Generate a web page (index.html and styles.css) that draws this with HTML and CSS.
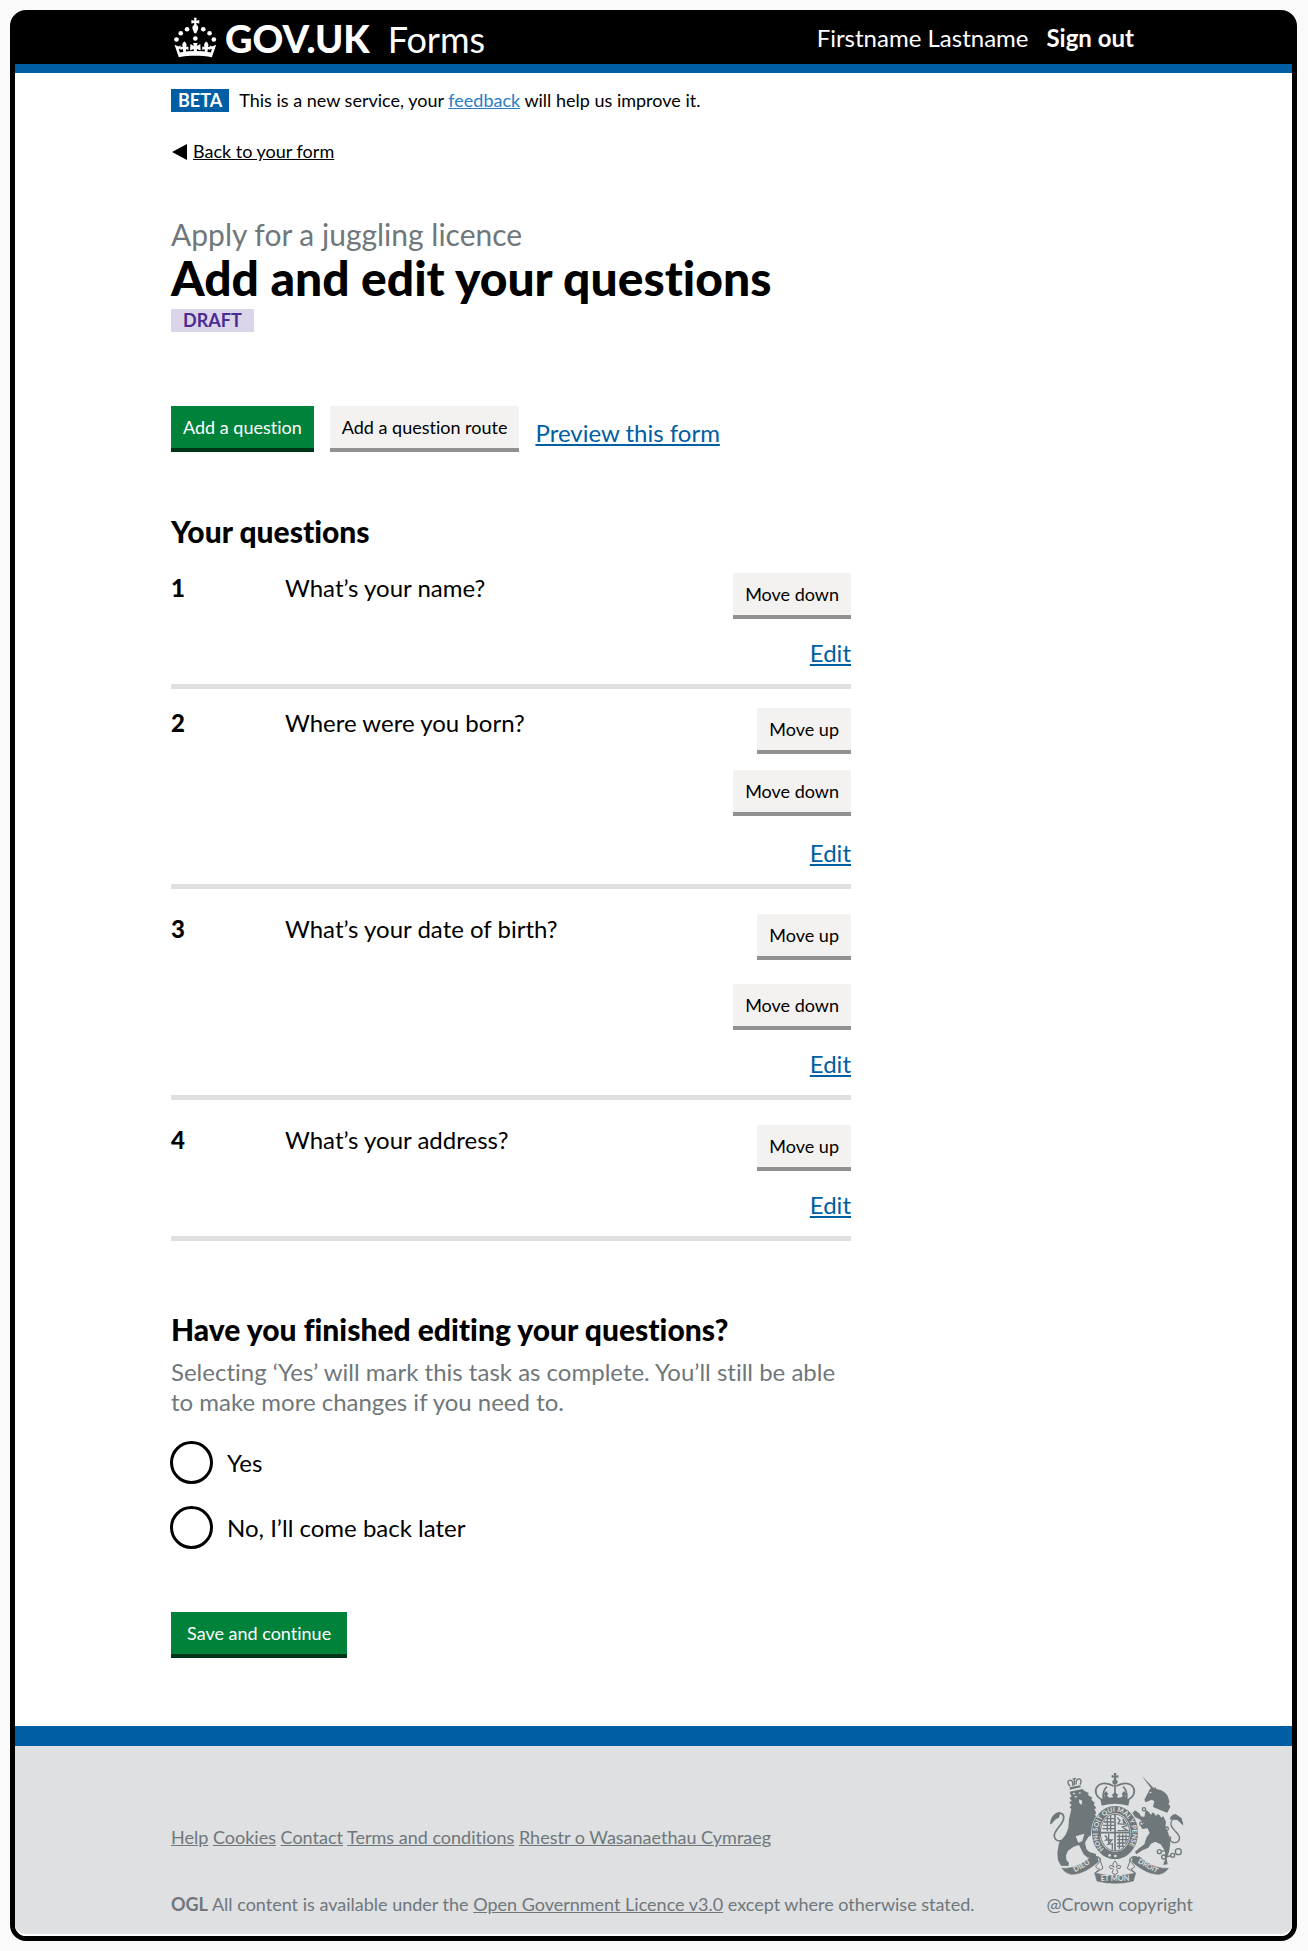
FILE: index.html
```html
<!DOCTYPE html>
<html lang="en">
<head>
<meta charset="utf-8">
<meta name="viewport" content="width=device-width, initial-scale=1">
<title>Add and edit your questions - GOV.UK Forms</title>
<link rel="stylesheet" href="styles.css">
</head>
<body>
<div class="frame">
  <header class="header">
    <div class="brand">
      <svg class="crown" viewBox="38 22 132 124" aria-hidden="true">
        <g fill="#fff">
          <circle cx="48" cy="90" r="7"/><circle cx="61" cy="71" r="7"/><circle cx="80" cy="59" r="7"/>
          <circle cx="129" cy="59" r="7"/><circle cx="148" cy="71" r="7"/><circle cx="161" cy="90" r="7"/>
          <circle cx="105" cy="87" r="7"/>
          <path d="M101 24h8l-1 9 9-2v11l-9-2 1 6c5 3 6 8 4 13l-5 12h-6l-5-12c-2-5-1-10 4-13l1-6-9 2V31l9 2z"/>
          <path d="M42 106l12 5 6-3 1 10-6 1 3 10q47-8 94 0l3-10-6-1 1-10 6 3 12-5-13 38c-32-6-68-6-100 0z"/>
          <path d="M69 130l-2-11-7 3v-11l7 2c-3-6-2-12 5-17 7 5 8 11 5 17l7-2v11l-7-3-1 11zM134 130l-1-11-7 3v-11l7 2c-3-6-2-12 5-17 7 5 8 11 5 17l7-2v11l-7-3-2 11z"/>
          <path d="M101 128l-1-9-11 4 1-19 11 6-3-9h14l-3 9 11-6 1 19-11-4-1 9z"/>
        </g>
      </svg>
      <span class="brand-name">GOV.UK</span>
      <span class="brand-product">Forms</span>
    </div>
    <div class="account">
      <span>Firstname Lastname</span>
      <a class="sign-out" href="#">Sign out</a>
    </div>
  </header>

  <main class="main">
    <div class="phase">
      <strong class="tag">BETA</strong>
      <span>This is a new service, your <a class="feedback" href="#">feedback</a> will help us improve it.</span>
    </div>
    <a class="back" href="#"><svg class="back-arrow" viewBox="0 0 15 16" aria-hidden="true"><path d="M0 8L15 0v16z"/></svg><span class="back-text">Back to your form</span></a>

    <p class="caption">Apply for a juggling licence</p>
    <h1 class="title">Add and edit your questions</h1>
    <strong class="tag tag-draft">DRAFT</strong>

    <div class="actions">
      <button class="button" type="button">Add a question</button>
      <button class="button button-grey" type="button">Add a question route</button>
      <a class="link preview" href="#">Preview this form</a>
    </div>

    <h2 class="heading">Your questions</h2>
    <ol class="questions">
      <li class="question">
        <span class="number">1</span><span class="text">What’s your name?</span>
        <div class="controls">
          <button class="button button-grey" type="button">Move down</button>
          <a class="link edit" href="#">Edit</a>
        </div>
      </li>
      <li class="question question-compact">
        <span class="number">2</span><span class="text">Where were you born?</span>
        <div class="controls">
          <button class="button button-grey" type="button">Move up</button>
          <button class="button button-grey" type="button">Move down</button>
          <a class="link edit" href="#">Edit</a>
        </div>
      </li>
      <li class="question">
        <span class="number">3</span><span class="text">What’s your date of birth?</span>
        <div class="controls">
          <button class="button button-grey" type="button">Move up</button>
          <button class="button button-grey" type="button">Move down</button>
          <a class="link edit" href="#">Edit</a>
        </div>
      </li>
      <li class="question">
        <span class="number">4</span><span class="text">What’s your address?</span>
        <div class="controls">
          <button class="button button-grey" type="button">Move up</button>
          <a class="link edit" href="#">Edit</a>
        </div>
      </li>
    </ol>

    <form class="finish">
      <fieldset class="choices" aria-describedby="finish-hint">
        <legend class="heading">Have you finished editing your questions?</legend>
        <p class="hint" id="finish-hint">Selecting ‘Yes’ will mark this task as complete. You’ll still be able to make more changes if you need to.</p>
        <div class="choice"><input class="radio" type="radio" name="finished" id="yes"><label for="yes">Yes</label></div>
        <div class="choice"><input class="radio" type="radio" name="finished" id="no"><label for="no">No, I’ll come back later</label></div>
      </fieldset>
      <button class="button button-save" type="button">Save and continue</button>
    </form>
  </main>

  <footer class="footer">
    <div class="footer-text">
      <nav class="footer-links">
        <a href="#">Help</a> <a href="#">Cookies</a> <a href="#">Contact</a> <a href="#">Terms and conditions</a> <a href="#">Rhestr o Wasanaethau Cymraeg</a>
      </nav>
      <p class="licence"><strong>OGL</strong> All content is available under the <a href="#">Open Government Licence v3.0</a> except where otherwise stated.</p>
    </div>
    <div class="copyright">
      <svg class="crest" viewBox="60 38 405 333" aria-hidden="true">
        <!-- lion -->
        <g fill="#6f777b">
          <path d="M122 94l38-8 8 7 11 5-2 6 13 8-3 6 11 10-4 4 8 12-6 2 6 12-4 4 8 20 6 20 4 30-9-8-9-25-5 6 4 15-8-4-4 10-7 4-10 17 4 19 9 9 20 6v9l-25 2-12-10-14-28-16 5-17 12-6 14 1 14 8 9-2 9-22-1-9-16-2-22 5-30 20-25 8-20 2-26 7-30-5-6 6-8-8-6 8-6-7-8 7-5-4-6z"/>
          <path d="M64 190c-1-18 12-34 30-36l-4 18-18 8z"/>
          <path d="M122 81l32-6 1 6-32 7z"/>
        </g>
        <path d="M112 230c-10 16-32 16-36-2-4-20 32-36 28-60-4-13-18-10-22 0-2 8-10 12-17 22" fill="none" stroke="#6f777b" stroke-width="5"/>
        <path d="M124 78c-14-12-4-24 5-16 3 4 3 10 2 15M153 73c8-14-2-22-9-15-4 4-3 10-2 15M136 53v22M131 56l10-2" fill="none" stroke="#6f777b" stroke-width="4"/>
        <path d="M130 99l9-2-3 6zM148 96l9 1-5 4zM151 117l9 5-3 13-7-9zM135 108h10l-4 5zM140 228l26-8-6 22-12 5z" fill="#dee0e2"/>
        <!-- unicorn -->
        <g fill="#6f777b">
          <path d="M338 46l39 40-7 3zM364 84l9 3 6-8 3 7q29 4 36 27l4 13-4 3 6 10-9 18-7-2-36-15 4-17-8-5-18 8-4-8 8-15z"/>
          <path d="M350 150L403 168L411 185L409 200L418 218L424 250L420 275L413 295L416 312L402 314L409 296L408 272L395 252L378 244L366 250L358 262L340 270L322 282L318 274L332 262L346 252L352 232L362 218L356 204L340 206L334 196L346 190L334 178L318 170L310 158L318 150L330 158L336 168L346 170Z"/>
          <path d="M458 174l5 22-18-17-23-2q4-15 18-16z"/>
        </g>
        <g fill="none" stroke="#6f777b" stroke-width="4">
          <path d="M461 190c-13-25-38-16-35 3 5 20 30 27 25 44-5 15-26 12-31-3"/>
          <path d="M350 142l16 18 5-13 10 17 7-13 9 18 11-8" stroke="#dee0e2"/>
          <circle cx="345" cy="147" r="5"/><circle cx="337" cy="190" r="5"/><circle cx="413" cy="205" r="5"/><circle cx="420" cy="234" r="5"/><circle cx="391" cy="274" r="6"/><circle cx="404" cy="290" r="6"/><circle cx="431" cy="285" r="6"/><circle cx="448" cy="274" r="9"/>
          <path d="M398 273l10-2M410 290l16-4"/>
        </g>
        <path d="M359 98l7-4 2 5z" fill="#dee0e2"/>
        <!-- crown -->
        <g fill="none" stroke="#6f777b" stroke-width="5">
          <path d="M220 119c-40-20-15-69 34-42M296 119c40-20 15-69-34-42M258 72v49M234 79c-12 9-13 24-11 39M282 79c12 9 13 24 11 39"/>
          <path d="M217 119q41-12 82 0l-3 14q-38-10-76 0z" fill="#6f777b"/>
        </g>
        <path d="M254 38h8l-1 8 7-2v9l-7-2 1 8c5 2 6 9 0 13h-8c-6-4-5-11 0-13l1-8-7 2v-9l7 2zM222 116l5-10-4-5 8-9 7 9-4 5 12 11 7-8-5-5 10-8 10 8-5 5 7 8 12-11-4-5 7-9 8 9-4 5 5 10z" fill="#6f777b"/>
        <!-- shield and garter -->
        <g fill="none" stroke="#6f777b">
          <ellipse cx="258" cy="217" rx="70" ry="81" stroke="#dee0e2" stroke-width="3"/>
          <ellipse cx="258" cy="217" rx="58" ry="69" stroke-width="22"/>
          <ellipse cx="258" cy="217" rx="44" ry="55" fill="#dee0e2" stroke-width="3"/>
          <path d="M214 217h88M258 162v110" stroke-width="5"/>
          <path d="M225 185h30M222 195h33M220 205h35M232 175h23M235 170v42M245 165v47M263 228h38M264 238h33M264 248h29M264 258h22M271 222v43M281 222v34M291 222v23" stroke-width="4"/>
          <path d="M265 172l8 9-6 9 18 2-3-16 12 20-14 4 16 11h-30M227 226q12 7 4 13h18l-12 13 13-2v18M239 221v31" stroke-width="4"/>
        </g>
        <path id="garter-arc" d="M226 267a52 63 0 1 1 64 0" fill="none"/>
        <g class="motto">
          <text font-size="20"><textPath href="#garter-arc" startOffset="1">HONI SOIT QUI MAL Y PENSE</textPath></text>
        </g>
        <g fill="#dee0e2"><circle cx="242" cy="285" r="4"/><circle cx="259" cy="287" r="4"/></g>
        <!-- ribbon -->
        <g fill="#6f777b" stroke="#6f777b" stroke-width="2">
          <path d="M99 324c35 2 65-14 86-34l20 0 3 14c-24 20-49 37-80 38-13-2-22-8-29-18z"/>
          <path d="M418 324c-35 2-65-14-86-34l-20 0-3 14c24 20 49 37 80 38 13-2 22-8 29-18z"/>
          <path d="M197 338q61 17 123 0l-7 24q-55 14-109 0z"/>
        </g>
        <g fill="#dee0e2" stroke="#6f777b" stroke-width="3">
          <path d="M190 292c20-8 34 4 18 17s-3 14 3 17l-13 12 24-14-9-25q0-10-12-10z"/>
          <path d="M327 292c-20-8-34 4-18 17s3 14-3 17l13 12-24-14 9-25q0-10 12-10z"/>
        </g>
        <path d="M258 302q11 10 3 19 12-11 14-2 0 8-9 5l-3 3 4 10-9 6-9-6 4-10-3-3q-9 3-9-5 2-9 14 2-8-9 3-19z" fill="none" stroke="#6f777b" stroke-width="3"/>
        <g class="motto" text-anchor="middle">
          <text font-size="22" x="161" y="323" transform="rotate(-30 161 323)">DIEU</text>
          <text font-size="22" x="258" y="363">ET MON</text>
          <text font-size="21" x="354" y="323" transform="rotate(29 354 323)">DROIT</text>
        </g>
      </svg>
      <span>@Crown copyright</span>
    </div>
  </footer>
</div>
</body>
</html>
```
FILE: styles.css
```css
* { box-sizing: border-box; }

body {
  margin: 0;
  padding: 10px 11px 10px 10px;
  background: #fafafa;
  color: #000;
  font-family: Lato, "Liberation Sans", sans-serif;
  font-size: 24px;
  line-height: 30px;
  font-variant-ligatures: none;
}

h1, h2, p, ol { margin: 0; padding: 0; }

.frame {
  border: 5px solid #000;
  border-radius: 16px;
  background: #fff;
}

.header {
  display: flex;
  justify-content: space-between;
  align-items: center;
  height: 58px;
  padding: 0 158px 4px 158px;
  border-bottom: 9px solid #005ea5;
  background: #000;
  color: #fff;
}

.brand { display: flex; align-items: baseline; }
.crown { width: 44px; height: 41px; margin-right: 8px; align-self: center; }
.brand-name { font-size: 38px; line-height: 48px; font-weight: 900; }
.brand-product { margin-left: 18px; font-size: 36px; }

.account { display: flex; gap: 18px; }
.sign-out { color: #fff; font-weight: 700; text-decoration: none; }

.main {
  display: flex;
  flex-direction: column;
  align-items: flex-start;
  padding: 16px 24px 68px 156px;
}

.phase, .back { font-size: 18px; line-height: 23px; }
.phase { display: flex; gap: 10px; }

.tag {
  padding: 0 7px;
  background: #005ea5;
  color: #fff;
  font-size: 18px;
  line-height: 23px;
  font-weight: 700;
}
.tag-draft {
  margin-top: 5px;
  padding: 0 12px;
  background: #dbd5e9;
  color: #4c2c92;
}

.feedback { color: #2b7cc4; }

.back {
  display: flex;
  align-items: center;
  gap: 6px;
  margin-top: 28px;
  color: #000;
  text-decoration: none;
}
.back-arrow { width: 15px; height: 16px; margin-left: 1px; }
.back-text { text-decoration: underline; }

.caption { margin-top: 53px; color: #6f777b; font-size: 30px; line-height: 36px; }
.title { font-size: 48px; line-height: 52px; font-weight: 900; }

.actions { display: flex; gap: 16px; margin-top: 74px; }

.button {
  height: 46px;
  padding: 0 12px;
  border: 0;
  border-bottom: 4px solid #003618;
  border-radius: 0;
  background: #00823b;
  color: #fff;
  font: inherit;
  font-size: 18px;
  line-height: 42px;
}
.button-grey { border-color: #929191; background: #f3f2f1; color: #000; }
.button-save { margin-top: 63px; padding: 0 16px; }

.link { color: #005ea5; }
.preview { margin-top: 12px; }

.heading { padding: 0; font-size: 30px; line-height: 34px; font-weight: 900; }
.actions + .heading { margin-top: 62px; }

.questions { width: 100%; max-width: 680px; list-style: none; }
.question {
  display: grid;
  grid-template-columns: 114px 1fr auto;
  padding: 25px 0 16px;
  border-bottom: 5px solid #dee0e2;
}
.number { font-weight: 900; }
.controls { display: flex; flex-direction: column; align-items: flex-end; gap: 24px; }
.edit { margin-top: -5px; }
.question-compact { padding-top: 19px; }
.question-compact .controls { gap: 16px; }
.question-compact .edit { margin-top: 6px; }

.finish { max-width: 680px; margin-top: 71px; }
.choices { margin: 0; padding: 0; border: 0; }
.hint { margin: 11px 0 24px; color: #6f777b; }
.choice { display: flex; align-items: center; gap: 14px; }
.choice + .choice { margin-top: 22px; }
.radio {
  appearance: none;
  width: 43px;
  height: 43px;
  margin: 0 0 0 -1px;
  border: 3px solid #000;
  border-radius: 50%;
  background: #fff;
}

.footer {
  display: flex;
  justify-content: space-between;
  align-items: flex-end;
  padding: 27px 99px 18px 156px;
  border-top: 20px solid #005ea5;
  border-bottom: 2px solid #fff;
  border-radius: 0 0 11px 11px;
  background: #dee0e2;
  color: #6f777b;
  font-size: 18px;
  line-height: 24px;
}
.footer a { color: inherit; }
.footer-text { display: flex; flex-direction: column; gap: 43px; }
.copyright { display: flex; flex-direction: column; gap: 8px; }
.crest { width: 135px; height: 111px; margin-left: 2px; }
.motto { fill: #dee0e2; font-weight: 700; }
```
